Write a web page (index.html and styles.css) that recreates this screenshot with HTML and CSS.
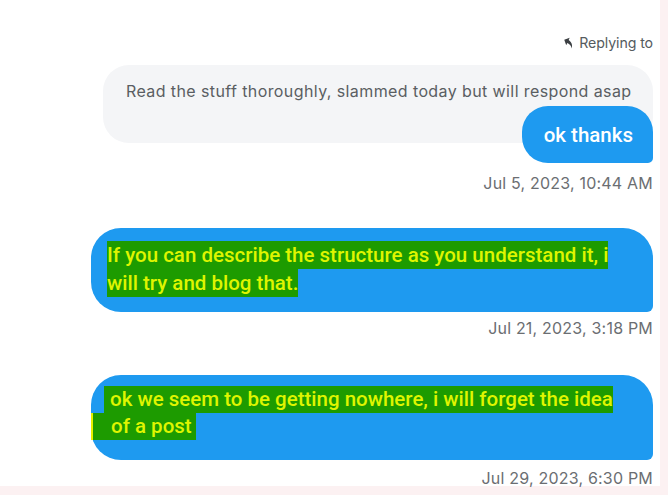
FILE: index.html
```html
<!DOCTYPE html>
<html>
<head>
<meta charset="utf-8">
<link rel="stylesheet" href="styles.css">
</head>
<body>
<div class="panel">
  <div class="reply-label">
    <svg class="reply-icon" viewBox="0 0 24 24" width="14" height="14"><path d="M10 9V5l-7 7 7 7v-4.1c5 0 8.5 1.6 11 5.1-1-5-4-10-11-11z"/></svg>
    <span>Replying to</span>
  </div>
  <div class="quoted">Read the stuff thoroughly, slammed today but will respond asap</div>
  <div class="row"><div class="bubble short">ok thanks</div></div>
  <div class="time t1">Jul 5, 2023, 10:44 AM</div>

  <div class="bubble long b2">
    <span class="hl">If you can describe the structure as you understand it, i</span>
    <span class="hl">will try and blog that.</span>
  </div>
  <div class="time t2">Jul 21, 2023, 3:18 PM</div>

  <div class="bubble long b3">
    <span class="hl first">ok we seem to be getting nowhere, i will forget the idea</span>
    <span class="hl second">of a post</span>
  </div>
  <div class="time t3">Jul 29, 2023, 6:30 PM</div>
</div>
</body>
</html>
```
FILE: styles.css
```css
html, body {
  margin: 0;
  padding: 0;
}
body {
  background: #fcf1f2;
  width: 668px;
  height: 495px;
  overflow: hidden;
  font-family: Inter, "Liberation Sans", sans-serif;
}
.panel {
  width: 660px;
  height: 486px;
  background: #ffffff;
  box-sizing: border-box;
  padding: 32px 7px 0 0;
  display: flex;
  flex-direction: column;
  align-items: flex-end;
}
.panel > * {
  flex-shrink: 0;
}
.reply-label {
  display: flex;
  align-items: center;
  gap: 3px;
  height: 20px;
  font-size: 14.2px;
  color: #555b60;
  letter-spacing: -0.1px;
}
.reply-icon {
  fill: #3c4043;
  transform: rotate(25deg);
}
.quoted {
  align-self: stretch;
  margin-left: 103px;
  margin-top: 13px;
  height: 78px;
  box-sizing: border-box;
  padding: 15px 0 0 23px;
  background: #f4f5f7;
  border-radius: 26px;
  font-size: 16px;
  line-height: 22px;
  color: #5a5e62;
  letter-spacing: 0.4px;
}
.row {
  margin-top: -37px;
  display: flex;
  justify-content: flex-end;
}
.bubble {
  background: #1e9af0;
  color: #ffffff;
  font-family: Roboto, "Liberation Sans", sans-serif;
  font-weight: 500;
}
.short {
  height: 57px;
  box-sizing: border-box;
  padding: 0 20px 0 22px;
  display: flex;
  align-items: center;
  font-size: 20.5px;
  letter-spacing: 0;
  border-radius: 26px 26px 5px 26px;
}
.time {
  font-size: 16px;
  line-height: 20px;
  color: #6b6e72;
  letter-spacing: 0.2px;
}
.t1 { margin-top: 10px; }
.t2 { margin-top: 6px; }
.t3 { margin-top: 8px; }

.long {
  align-self: stretch;
  margin-left: 91px;
  box-sizing: border-box;
  display: flex;
  flex-direction: column;
  align-items: flex-start;
  font-size: 20.5px;
  letter-spacing: 0;
  border-radius: 30px 30px 6px 30px;
}
.b2 {
  margin-top: 35px;
  height: 84px;
  padding: 13px 0 0 16px;
}
.b3 {
  margin-top: 37px;
  height: 85px;
  padding: 11px 0 0 0;
}
.hl {
  display: block;
  background: #1d9b00;
  color: #dff500;
  line-height: 28px;
  height: 28px;
  white-space: nowrap;
}
.b3 .hl { line-height: 27px; height: 27px; }
.first {
  margin-left: 13px;
  padding-left: 6px;
}
.second {
  padding-left: 18px;
  padding-right: 4px;
  border-left: 2px solid #e6f000;
}
```
